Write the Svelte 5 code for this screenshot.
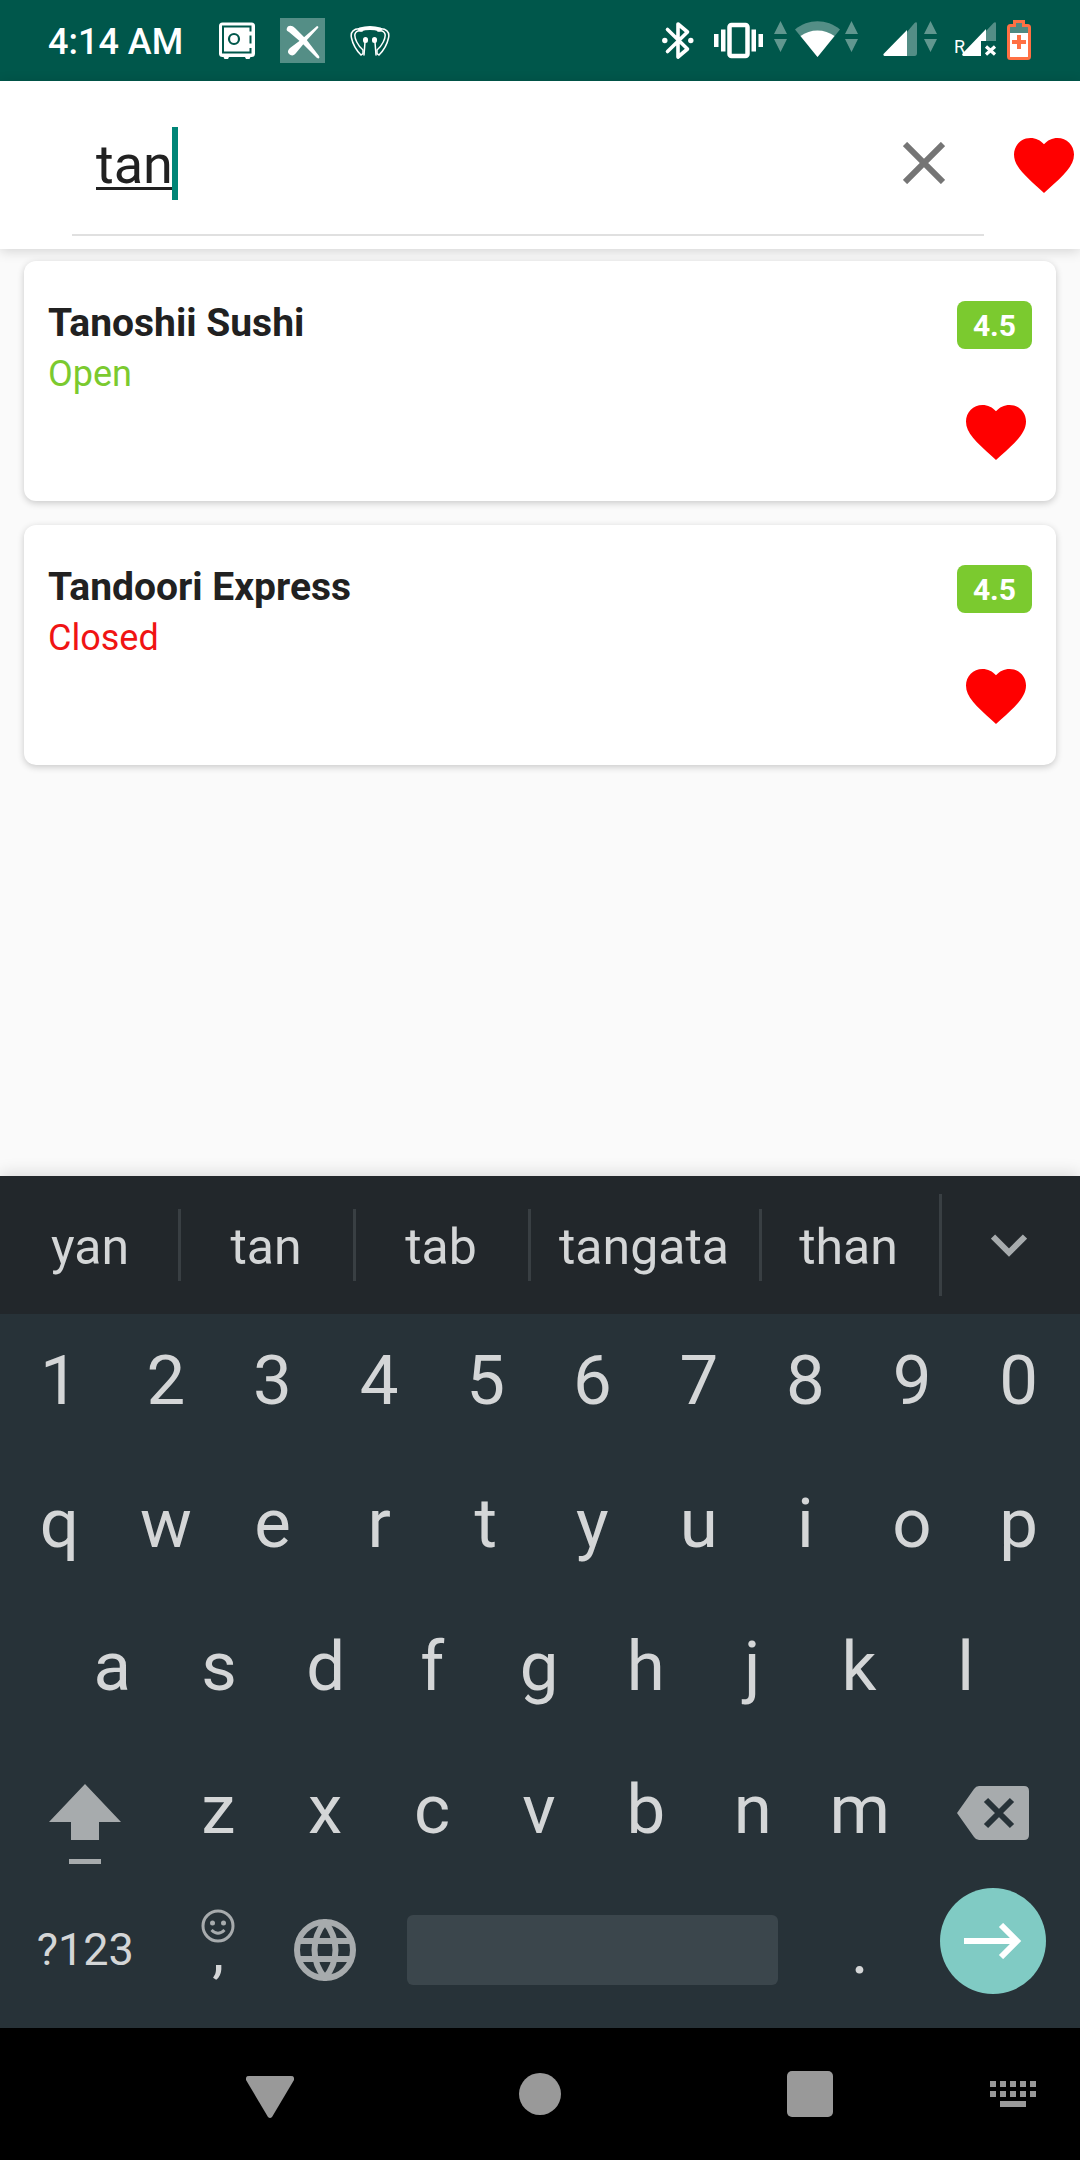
<script>
  let query = $state('tan');

  let places = $state([
    { name: 'Tanoshii Sushi', open: true, rating: '4.5' },
    { name: 'Tandoori Express', open: false, rating: '4.5' }
  ]);

  const suggestions = [
    { word: 'yan', size: 'first' },
    { word: 'tan', size: 'short' },
    { word: 'tab', size: 'short' },
    { word: 'tangata', size: 'long' },
    { word: 'than', size: 'last' }
  ];

  const digits = '1234567890'.split('');
  const top = 'qwertyuiop'.split('');
  const home = 'asdfghjkl'.split('');
  const bottom = 'zxcvbnm'.split('');
  const dots = [0, 10, 20, 30, 40];

  const type = (c) => (query += c);
</script>

{#snippet heart()}
  <svg class="heart" viewBox="0 0 24 24" aria-hidden="true">
    <path d="M12 21.35l-1.45-1.32C5.4 15.36 2 12.28 2 8.5 2 5.42 4.42 3 7.5 3c1.74 0 3.41.81 4.5 2.09C13.09 3.81 14.76 3 16.5 3 19.58 3 22 5.42 22 8.5c0 3.78-3.4 6.86-8.55 11.54L12 21.35z" />
  </svg>
{/snippet}

{#snippet traffic()}
  <svg class="traffic" width="13" height="45" viewBox="0 0 13 45" aria-hidden="true">
    <path d="M6.500 3L13 16H0zM0 21h13L6.500 34z" />
  </svg>
{/snippet}

{#snippet key(c)}
  <button class="key" onclick={() => type(c)}>{c}</button>
{/snippet}

<div class="screen">
  <header class="status">
    <span class="time">4:14 AM</span>
    <svg class="safe" width="36" height="45" viewBox="0 0 36 45" aria-hidden="true">
      <rect y="4.500" width="36" height="34.500" rx="3.500" fill="#fff" />
      <path d="M4 38h6.500L9 41H5.500zM25.500 38H32l-1.500 3H27z" fill="#fff" />
      <path d="M31.500 13.500V8.500H4v26h27.500V30M31.500 17.500v8" fill="none" stroke="#00574b" stroke-width="2" />
      <circle cx="15" cy="21" r="5" fill="none" stroke="#00574b" stroke-width="2.200" />
    </svg>
    <svg class="xicon" width="45" height="45" viewBox="0 0 45 45" aria-hidden="true">
      <path fill="#fff" fill-opacity=".33" d="M0 0h45v45H0z" />
      <path fill="#fff" d="M7 10c1-3 5-3 8 0l11 11 13 17c1 2 0 3-2 2L22 25 9 14c-2-1-3-2-2-4z" />
      <path fill="#fff" d="M37 8c1 0 2 1 1 2L26 23 16 35c-2 3-5 3-7 1s-1-4 1-6l12-9z" />
    </svg>
    <svg width="40" height="45" viewBox="0 0 40 45" aria-hidden="true" fill="none" stroke="#fff" stroke-linecap="round">
      <path d="M10 11.500q10-3 20 0" stroke-width="4" />
      <path d="M11 11C4 10 0 14 1.500 20C3 27 7 33 11 37l2-1.500V32C8 28 4 20 5 16c1-3 3-4 7-3M29 11c7-1 11 3 9.500 9C37 27 33 33 29 37l-2-1.500V32c5-4 9-12 8-16-1-3-3-4-7-3" stroke-width="1.500" />
      <path d="M15.500 21.500v1M24.500 21.500v1" stroke-width="5" />
      <path d="M15 24l-1 13M25 24l1 13" stroke-width="1.500" />
    </svg>
    <span class="spacer"></span>
    <svg class="bt" width="32" height="45" viewBox="0 0 32 45" aria-hidden="true">
      <path d="M5.500 11.500l20 19.500-9.500 8V6l9.500 8-20 19.500" fill="none" stroke="#fff" stroke-width="3.600" stroke-linejoin="round" stroke-linecap="round" />
      <circle cx="2.800" cy="22.500" r="2.700" fill="#fff" />
      <circle cx="28.800" cy="22.500" r="2.700" fill="#fff" />
    </svg>
    <svg class="vibrate" width="49" height="45" viewBox="0 0 49 45" aria-hidden="true">
      <rect x="15.500" y="7" width="18" height="31" rx="2" fill="none" stroke="#fff" stroke-width="4.500" />
      <path fill="#fff" d="M0 16h4.500v13H0zM7 11.500h4.500v22H7zM37.500 11.500H42v22h-4.500zM44.500 16H49v13h-4.500z" />
    </svg>
    {@render traffic()}
    <svg class="wifi" width="45" height="45" viewBox="0 0 45 45" aria-hidden="true">
      <path fill="#fff" fill-opacity=".33" d="M22.500 39L0 11.500C13 .5 32 .5 45 11.500z" />
      <path fill="#fff" d="M22.500 39L5.500 18C15 10.500 30 10.500 39.500 18z" />
    </svg>
    {@render traffic()}
    <svg class="signal" width="34" height="45" viewBox="0 0 34 45" aria-hidden="true">
      <path fill="#fff" fill-opacity=".33" d="M24 14l7.500-9c1.500-1.500 2.500-1 2.500 1v29q0 3-2.500 3H24z" />
      <path fill="#fff" d="M24 12v26H1.500Q-.5 37 1 35.500z" />
    </svg>
    {@render traffic()}
    <svg class="roaming" width="42" height="45" viewBox="0 0 42 45" aria-hidden="true">
      <text x="-1" y="35" fill="#fff" font-size="18">R</text>
      <path fill="#fff" fill-opacity=".33" d="M31 13l7.500-8c1.500-1.500 2.500-1 2.500 1v17H31z" />
      <path fill="#fff" d="M31 11v12h-5v15H8.500Q6 37 8 35z" />
      <path d="M31 28.500l9 8M40 28.500l-9 8" stroke="#fff" stroke-width="3.200" />
    </svg>
    <svg class="battery" width="24" height="45" viewBox="0 0 24 45" aria-hidden="true">
      <path fill="#4f8a82" d="M1.500 7.500h6v-4h9v4h6v8h-21z" />
      <path fill="#fff" d="M1.500 15h21v26h-21z" />
      <path d="M7.500 3.500h9v4h4q2 0 2 2v29q0 2-2 2h-17q-2 0-2-2v-29q0-2 2-2h4z" fill="none" stroke="#ff7043" stroke-width="3" />
      <path d="M12 17v14M5 24h14" stroke="#ff7043" stroke-width="4" />
    </svg>
  </header>

  <form class="toolbar" role="search" onsubmit={(e) => e.preventDefault()}>
    <div class="field">
      <input type="text" aria-label="Search restaurants" spellcheck="false" bind:value={query} />
      <span class="caret"></span>
      <button type="button" class="clear" aria-label="Clear" onclick={() => (query = '')}>
        <svg width="42" height="42" viewBox="0 0 42 42" aria-hidden="true">
          <path d="M2 2l38 38M40 2L2 40" stroke="#757575" stroke-width="6" />
        </svg>
      </button>
    </div>
    <button type="button" class="fav" aria-label="Favourites">{@render heart()}</button>
  </form>

  <main>
    {#each places as place}
      <article class="card">
        <div class="info">
          <h2>{place.name}</h2>
          <p class:open={place.open}>{place.open ? 'Open' : 'Closed'}</p>
        </div>
        <div class="side">
          <span class="rating">{place.rating}</span>
          <button type="button" class="fav" aria-label="Favourite {place.name}">{@render heart()}</button>
        </div>
      </article>
    {/each}
  </main>

  <section class="keyboard" aria-label="Keyboard">
    <div class="suggestions">
      {#each suggestions as s}
        <button class="word {s.size}" onclick={() => (query = s.word)}>{s.word}</button>
        <i class:tall={s.size === 'last'}></i>
      {/each}
      <button class="more" aria-label="More suggestions">
        <svg width="36" height="23" viewBox="0 0 36 23" aria-hidden="true">
          <path d="M2 2.500l16 16 16-16" fill="none" stroke="#a7abad" stroke-width="6" />
        </svg>
      </button>
    </div>

    <div class="keys">
      <div class="row">{#each digits as c}{@render key(c)}{/each}</div>
      <div class="row">{#each top as c}{@render key(c)}{/each}</div>
      <div class="row inset">{#each home as c}{@render key(c)}{/each}</div>
      <div class="row">
        <button class="key wide shift" aria-label="Shift">
          <svg width="72" height="80" viewBox="0 0 72 80" aria-hidden="true">
            <path d="M36 0l36 38H50v18H22V38H0zM20 75h32v5H20z" fill="#a7abad" />
          </svg>
        </button>
        {#each bottom as c}{@render key(c)}{/each}
        <button class="key wide erase" aria-label="Backspace" onclick={() => (query = query.slice(0, -1))}>
          <svg width="72" height="54" viewBox="0 0 72 54" aria-hidden="true">
            <path d="M22 0h45q5 0 5 5v44q0 5-5 5H22q-3 0-5-3L0 27 17 3q2-3 5-3z" fill="#a7abad" />
            <path d="M29 14l26 26M55 14L29 40" stroke="#273238" stroke-width="6" />
          </svg>
        </button>
      </div>
      <div class="row actions">
        <button class="key wide symbols">?123</button>
        <button class="key comma" onclick={() => type(',')}>
          <svg width="34" height="34" viewBox="0 0 34 34" aria-hidden="true">
            <circle cx="17" cy="17" r="15" fill="none" stroke="#a7abad" stroke-width="3" />
            <circle cx="11.500" cy="14" r="2.500" fill="#a7abad" />
            <circle cx="22.500" cy="14" r="2.500" fill="#a7abad" />
            <path d="M10.500 21q6.500 6.500 13 0" fill="none" stroke="#a7abad" stroke-width="3" />
          </svg>
          <span>,</span>
        </button>
        <button class="key" aria-label="Change language">
          <svg width="62" height="62" viewBox="0 0 62 62" aria-hidden="true" fill="none" stroke="#a7abad" stroke-width="6">
            <circle cx="31" cy="31" r="28" />
            <path d="M31 3C17 20 17 42 31 59C45 42 45 20 31 3zM5 22h52M5 40h52" />
          </svg>
        </button>
        <button class="space" aria-label="Space" onclick={() => type(' ')}><span></span></button>
        <button class="key period" onclick={() => type('.')}>.</button>
        <div class="wide enter">
          <button aria-label="Go">
            <svg width="58" height="36" viewBox="0 0 58 36" aria-hidden="true">
              <path d="M0 18h52M37 2l16 16-16 16" fill="none" stroke="#fff" stroke-width="6" />
            </svg>
          </button>
        </div>
      </div>
    </div>
  </section>

  <nav class="system">
    <span></span>
    <button class="back" aria-label="Back">
      <svg width="48" height="42" viewBox="0 0 48 42" aria-hidden="true"><path d="M3 0h42q4 0 3 4L26 41q-2 2-4 0L0 4q-1-4 3-4z" /></svg>
    </button>
    <button aria-label="Home">
      <svg width="42" height="42" viewBox="0 0 42 42" aria-hidden="true"><circle cx="21" cy="21" r="21" /></svg>
    </button>
    <button aria-label="Recent apps">
      <svg width="46" height="46" viewBox="0 0 46 46" aria-hidden="true"><rect width="46" height="46" rx="5" /></svg>
    </button>
    <button class="switch" aria-label="Switch keyboard">
      <svg width="46" height="26" viewBox="0 0 46 26" aria-hidden="true">
        {#each dots as x}
          <rect {x} y="0" width="6" height="6" />
          <rect {x} y="10" width="6" height="6" />
        {/each}
        <rect x="10" y="20" width="26" height="6" />
      </svg>
    </button>
  </nav>
</div>

<style>
  :global(body) {
    margin: 0;
    background: #fafafa;
  }

  .screen {
    display: flex;
    flex-direction: column;
    min-height: 100vh;
    font-family: Roboto, 'Liberation Sans', sans-serif;
    color: #212121;
  }

  svg {
    display: block;
    flex: none;
  }

  button {
    display: flex;
    align-items: center;
    justify-content: center;
    margin: 0;
    padding: 0;
    border: 0;
    background: none;
    color: inherit;
    font: inherit;
  }

  /* status bar */
  .status {
    display: flex;
    align-items: center;
    height: 81px;
    padding: 0 49px 0 48px;
    background: #00574b;
    color: #fff;
  }
  .time {
    padding-top: 3px;
    margin-right: 36px;
    font-size: 36px;
    font-weight: 500;
    line-height: 44px;
  }
  .safe,
  .xicon {
    margin-right: 25px;
  }
  .spacer {
    flex: 1;
  }
  .traffic {
    fill: #fff;
    fill-opacity: 0.38;
  }
  .bt {
    margin-right: 20px;
  }
  .vibrate {
    margin-right: 11px;
  }
  .wifi {
    margin: 0 5px 0 8px;
  }
  .signal {
    margin: 0 7px 0 25px;
  }
  .roaming {
    margin: 0 10px 0 18px;
  }

  /* search toolbar */
  .toolbar {
    display: flex;
    align-items: center;
    height: 168px;
    padding-left: 72px;
    background: #fff;
    box-shadow: 0 2px 12px rgba(0, 0, 0, 0.16);
    position: relative;
  }
  .field {
    flex: 1;
    display: flex;
    align-items: center;
    align-self: flex-start;
    height: 155px;
    margin-right: 24px;
    padding: 11px 0 0 24px;
    box-sizing: border-box;
    border-bottom: 2px solid #e0e0e0;
  }
  input {
    field-sizing: content;
    min-width: 0;
    padding: 4px 0 0;
    border: 0;
    outline: 0;
    background: none;
    color: inherit;
    font: inherit;
    font-size: 54px;
    line-height: 74px;
    text-decoration: underline;
    text-decoration-thickness: 3px;
    text-underline-offset: 4px;
  }
  .caret {
    width: 6px;
    height: 73px;
    margin-left: -1px;
    background: #008577;
  }
  .clear {
    width: 120px;
    height: 120px;
    margin-left: auto;
  }
  .heart {
    width: 72px;
    height: 72px;
    fill: #f00;
  }

  /* results */
  main {
    flex: 1;
    display: flex;
    flex-direction: column;
    gap: 24px;
    padding: 12px 24px 24px;
  }
  .card {
    display: flex;
    justify-content: space-between;
    min-height: 240px;
    padding: 36px 24px 33px;
    box-sizing: border-box;
    border-radius: 12px;
    background: #fff;
    box-shadow: 0 2px 7px rgba(0, 0, 0, 0.2);
    position: relative;
  }
  .info {
    padding-top: 1px;
  }
  h2 {
    margin: 0;
    font-size: 39px;
    font-weight: 700;
    line-height: 51px;
  }
  p {
    margin: 0;
    font-size: 36px;
    line-height: 51px;
    color: #f01414;
  }
  p.open {
    color: #7bca2f;
  }
  .side {
    display: flex;
    flex-direction: column;
    align-items: flex-end;
    justify-content: space-between;
    padding-top: 4px;
  }
  .rating {
    padding: 1px 16px 0;
    border-radius: 8px;
    background: #7bca2f;
    color: #fff;
    font-size: 30px;
    font-weight: 700;
    line-height: 47px;
  }

  /* keyboard */
  .keyboard {
    position: relative;
    background: #273238;
    color: #d4d6d7;
    box-shadow: 0 -2px 16px rgba(0, 0, 0, 0.14);
  }
  .suggestions {
    display: flex;
    align-items: center;
    height: 138px;
    background: #22272b;
    font-size: 50px;
    line-height: 60px;
  }
  .suggestions i {
    width: 3px;
    height: 72px;
    background: #393f43;
  }
  .suggestions i.tall {
    height: 102px;
  }
  .word {
    flex: 170 1 0;
    height: 138px;
    padding: 3px 2px 0 0;
  }
  .word.first {
    flex-grow: 176;
    padding: 3px 0 0 2px;
  }
  .word.long {
    flex-grow: 226;
  }
  .word.last {
    flex-grow: 173;
    padding-right: 4px;
  }
  .more {
    flex: 134 1 0;
    height: 138px;
    padding-right: 4px;
  }
  .keys {
    padding: 0 8px 0 6px;
  }
  .row {
    display: flex;
    height: 143px;
    font-size: 69px;
    line-height: 81px;
  }
  .row.inset {
    padding: 0 53px;
  }
  .key {
    flex: 107 1 0;
    height: 133px;
  }
  .wide {
    flex: 159 1 0;
  }
  .shift {
    padding-top: 28px;
    box-sizing: border-box;
  }
  .erase {
    padding-top: 6px;
    box-sizing: border-box;
  }
  .row.actions {
    height: 142px;
  }
  .actions .key,
  .space {
    height: 127px;
  }
  .actions .symbols {
    font-size: 45px;
  }
  .comma {
    flex-direction: column;
    font-size: 60px;
  }
  .comma span {
    height: 48px;
    line-height: 16px;
  }
  .space {
    flex: 371 1 0;
    margin: 0 29px;
  }
  .space span {
    width: 100%;
    height: 70px;
    border-radius: 6px;
    background: #3b464c;
  }
  .enter {
    display: flex;
    justify-content: center;
    padding-top: 2px;
  }
  .enter button {
    width: 106px;
    height: 106px;
    border-radius: 50%;
    background: #80cbc4;
  }

  /* system navigation */
  .system {
    display: grid;
    grid-template-columns: 135fr 270fr 270fr 270fr 135fr;
    height: 132px;
    background: #000;
    fill: #999;
  }
  .back {
    padding-top: 6px;
  }
</style>
